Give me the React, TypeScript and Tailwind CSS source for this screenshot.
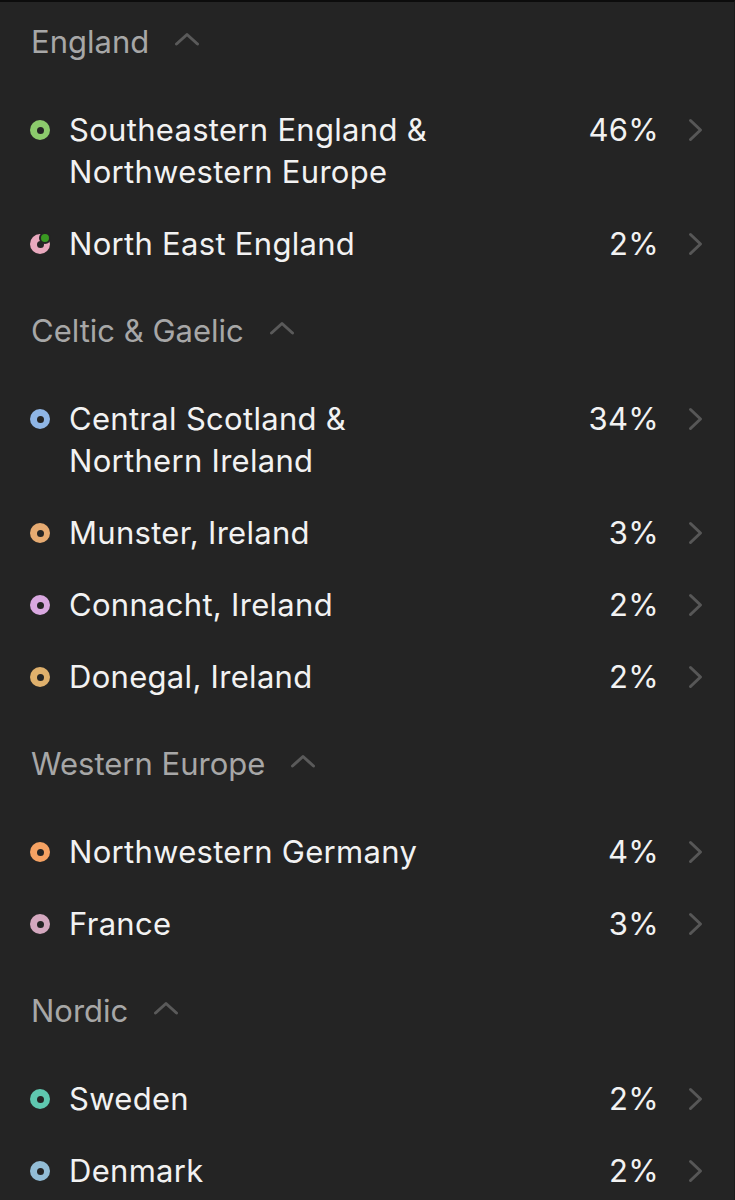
import React from 'react';

type Region = {
  name: string;
  pct: string;
  color: string;
  badge?: string;
};

type Group = {
  title: string;
  regions: Region[];
};

const groups: Group[] = [
  {
    title: 'England',
    regions: [
      { name: 'Southeastern England & Northwestern Europe', pct: '46%', color: 'bg-[#8ccb6c]' },
      { name: 'North East England', pct: '2%', color: 'bg-[#e9a9be]', badge: 'bg-[#3a9a22]' },
    ],
  },
  {
    title: 'Celtic & Gaelic',
    regions: [
      { name: 'Central Scotland & Northern Ireland', pct: '34%', color: 'bg-[#8fb6e6]' },
      { name: 'Munster, Ireland', pct: '3%', color: 'bg-[#e6ab72]' },
      { name: 'Connacht, Ireland', pct: '2%', color: 'bg-[#d9a8e0]' },
      { name: 'Donegal, Ireland', pct: '2%', color: 'bg-[#dfb06c]' },
    ],
  },
  {
    title: 'Western Europe',
    regions: [
      { name: 'Northwestern Germany', pct: '4%', color: 'bg-[#f5a263]' },
      { name: 'France', pct: '3%', color: 'bg-[#d4a8bf]' },
    ],
  },
  {
    title: 'Nordic',
    regions: [
      { name: 'Sweden', pct: '2%', color: 'bg-[#5fc8b0]' },
      { name: 'Denmark', pct: '2%', color: 'bg-[#93bdd6]' },
    ],
  },
];

function ChevronUp() {
  return (
    <svg width="26" height="14" viewBox="0 0 26 14" fill="none" className="text-[#5a5a5a]">
      <path d="M2.5 12 L13 2.5 L23.5 12" stroke="currentColor" strokeWidth="3" strokeLinecap="round" strokeLinejoin="round" />
    </svg>
  );
}

function ChevronRight() {
  return (
    <svg width="15" height="24" viewBox="0 0 15 24" fill="none" className="text-[#575757]">
      <path d="M2.5 2.5 L12.5 12 L2.5 21.5" stroke="currentColor" strokeWidth="3" strokeLinecap="round" strokeLinejoin="round" />
    </svg>
  );
}

function Dot({ color, badge }: { color: string; badge?: string }) {
  return (
    <div className="relative h-[42px] w-[20px] flex items-center shrink-0">
      <div className={`w-[20px] h-[20px] rounded-full flex items-center justify-center ${color}`}>
        <div className="w-[7px] h-[7px] rounded-full bg-[#242424]" />
      </div>
      {badge && (
        <div className={`absolute top-[9px] left-[9px] w-[12px] h-[12px] rounded-full border-2 border-[#242424] ${badge}`} />
      )}
    </div>
  );
}

export default function App() {
  return (
    <div
      className="w-[735px] h-[1200px] overflow-hidden bg-[#242424] border-t-2 border-t-[#0c0c0c] border-r border-r-[#1b1b1b] pt-[19px]"
      style={{ fontFamily: 'Inter, "Noto Sans", sans-serif' }}
    >
      <div className="flex flex-col gap-[30px]">
        {groups.map((group) => (
          <div key={group.title}>
            {/* Group header */}
            <div className="flex items-center pl-[31px] mb-[31px] h-[42px]">
              <span className="text-[31px] leading-[42px] text-[#a7a7a7]">{group.title}</span>
              <span className="ml-[25px] -mt-[6px]">
                <ChevronUp />
              </span>
            </div>

            {group.regions.map((r) => (
              <div key={r.name} className="flex items-start py-[15px] pl-[30px] pr-[31px]">
                <Dot color={r.color} badge={r.badge} />
                <div className="flex-1 ml-[19px]">
                  <div className="max-w-[380px] text-[31px] leading-[42px] text-[#f2f2f2] tracking-[0.3px]">
                    {r.name}
                  </div>
                </div>
                <span className="text-[31px] leading-[42px] text-[#f2f2f2] tracking-[0.3px]">{r.pct}</span>
                <span className="ml-[29px] h-[42px] flex items-center">
                  <ChevronRight />
                </span>
              </div>
            ))}
          </div>
        ))}
      </div>
    </div>
  );
}
